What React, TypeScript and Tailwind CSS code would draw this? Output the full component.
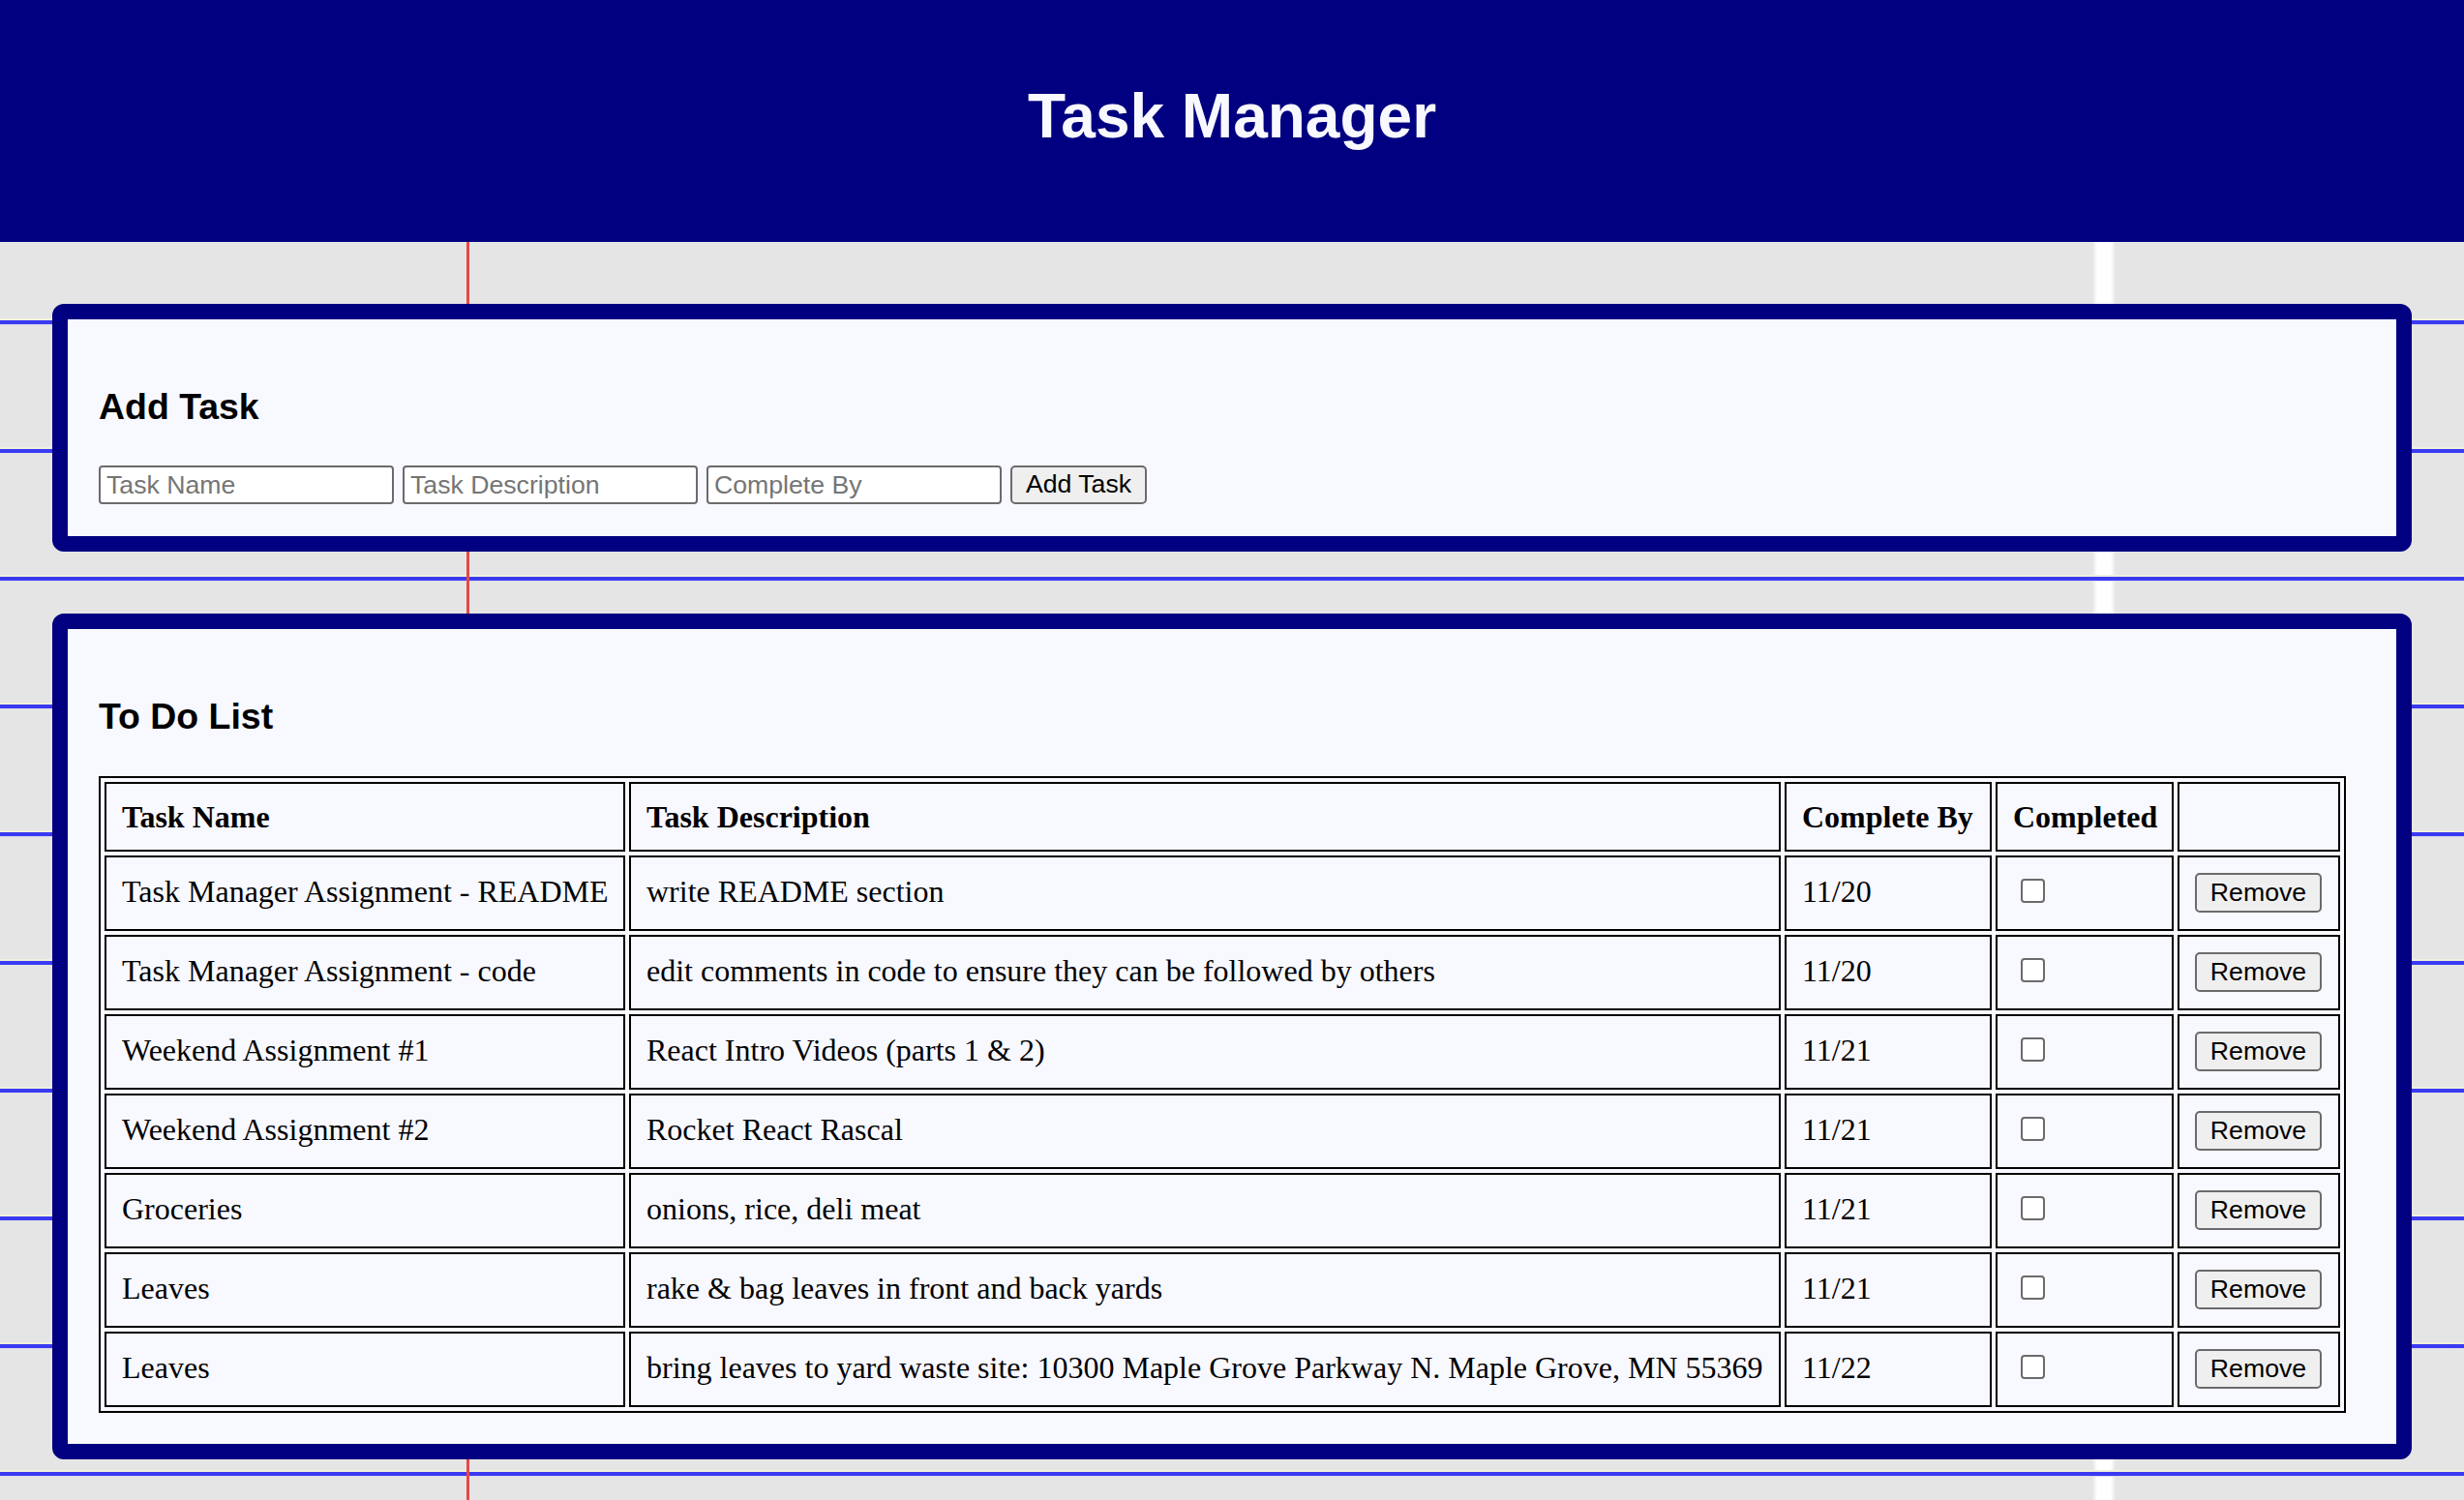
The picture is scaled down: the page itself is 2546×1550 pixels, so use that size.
import React, { useState } from "react";

type Task = { name: string; desc: string; by: string; done: boolean };

const initialTasks: Task[] = [
  { name: "Task Manager Assignment - README", desc: "write README section", by: "11/20", done: false },
  { name: "Task Manager Assignment - code", desc: "edit comments in code to ensure they can be followed by others", by: "11/20", done: false },
  { name: "Weekend Assignment #1", desc: "React Intro Videos (parts 1 & 2)", by: "11/21", done: false },
  { name: "Weekend Assignment #2", desc: "Rocket React Rascal", by: "11/21", done: false },
  { name: "Groceries", desc: "onions, rice, deli meat", by: "11/21", done: false },
  { name: "Leaves", desc: "rake & bag leaves in front and back yards", by: "11/21", done: false },
  { name: "Leaves", desc: "bring leaves to yard waste site: 10300 Maple Grove Parkway N. Maple Grove, MN 55369", by: "11/22", done: false },
];

export default function App() {
  const [tasks, setTasks] = useState<Task[]>(initialTasks);
  const [name, setName] = useState("");
  const [desc, setDesc] = useState("");
  const [by, setBy] = useState("");

  const addTask = () => {
    if (!name.trim()) return;
    setTasks([...tasks, { name, desc, by, done: false }]);
    setName("");
    setDesc("");
    setBy("");
  };

  const inputCls =
    "h-[40px] w-[305px] rounded-[4px] border-2 border-[#6b6b6b] bg-white px-[6px] text-[26.67px] text-black placeholder:text-[#757575] outline-none font-['Liberation_Sans',Arial,sans-serif]";

  return (
    <div className="min-h-screen bg-[#e5e5e5] bg-[image:linear-gradient(to_right,transparent_482px,#e64848_482px,#e64848_485px,transparent_485px),repeating-linear-gradient(to_bottom,transparent_0px,transparent_65px,#f0f0dc_65px,#f0f0dc_67px,#3a3af2_67px,#3a3af2_71px,#d6d6f2_71px,transparent_72px,transparent_132.22px),linear-gradient(to_right,transparent_2162px,#ffffff_2167px,#ffffff_2181px,transparent_2186px)] pb-[42px] font-['Liberation_Sans',Arial,sans-serif]">
      <header className="h-[250px] bg-[#000080] pt-[83px]">
        <h1 className="text-center text-[64px] font-bold leading-[74px] text-[#f8f8ff]">Task Manager</h1>
      </header>

      <main className="flex flex-col gap-[64px] px-[54px] pt-[64px]">
        <section className="rounded-[12px] border-[16px] border-[#000080] bg-[#f8f8ff] px-[32px] pb-[33px] pt-[32px]">
          <h3 className="mb-[39px] mt-[37px] text-[37.44px] font-bold leading-[43px] text-black">Add Task</h3>
          <div className="flex gap-[9px]">
            <input className={inputCls} placeholder="Task Name" value={name} onChange={(e) => setName(e.target.value)} />
            <input className={inputCls} placeholder="Task Description" value={desc} onChange={(e) => setDesc(e.target.value)} />
            <input className={inputCls} placeholder="Complete By" value={by} onChange={(e) => setBy(e.target.value)} />
            <button
              onClick={addTask}
              className="h-[40px] w-[141px] rounded-[5px] border-2 border-[#6b6b6b] bg-[#efefef] pb-[3px] text-[26.67px] leading-[30px] text-black font-['Liberation_Sans',Arial,sans-serif]"
            >
              Add Task
            </button>
          </div>
        </section>

        <section className="rounded-[12px] border-[16px] border-[#000080] bg-[#f8f8ff] px-[32px] pb-[32px] pt-[32px]">
          <h3 className="mb-[40px] mt-[37px] text-[37.44px] font-bold leading-[43px] text-black">To Do List</h3>
          <table className="w-[2322px] table-fixed border-separate border-spacing-[4px] border-2 border-black text-[32px] leading-[36px] text-black font-['Liberation_Serif','Times_New_Roman',serif]">
            <thead>
              <tr>
                <th className="w-[538px] whitespace-nowrap border-2 border-black p-[16px] text-left align-middle font-bold">Task Name</th>
                <th className="w-[1190px] whitespace-nowrap border-2 border-black p-[16px] text-left align-middle font-bold">Task Description</th>
                <th className="w-[214px] whitespace-nowrap border-2 border-black p-[16px] text-left align-middle font-bold">Complete By</th>
                <th className="w-[184px] whitespace-nowrap border-2 border-black p-[16px] text-left align-middle font-bold">Completed</th>
                <th className="w-[168px] border-2 border-black p-[16px]"></th>
              </tr>
            </thead>
            <tbody>
              {tasks.map((t, i) => (
                <tr key={i}>
                  <td className="whitespace-nowrap border-2 border-black px-[16px] pb-[20px] pt-[16px] align-middle">{t.name}</td>
                  <td className="whitespace-nowrap border-2 border-black px-[16px] pb-[20px] pt-[16px] align-middle">{t.desc}</td>
                  <td className="whitespace-nowrap border-2 border-black px-[16px] pb-[20px] pt-[16px] align-middle">{t.by}</td>
                  <td className="border-2 border-black p-[16px] align-middle">
                    <input
                      type="checkbox"
                      checked={t.done}
                      onChange={() =>
                        setTasks(tasks.map((x, j) => (j === i ? { ...x, done: !x.done } : x)))
                      }
                      className="mb-[5px] ml-[8px] block h-[25px] w-[25px] appearance-none rounded-[4px] border-2 border-[#6b6b6b] bg-white checked:border-[#0075ff] checked:bg-[#0075ff]"
                    />
                  </td>
                  <td className="border-2 border-black p-[16px] align-middle">
                    <button
                      onClick={() => setTasks(tasks.filter((_, j) => j !== i))}
                      className="mb-[1px] block h-[41px] w-[131px] rounded-[5px] border-2 border-[#6b6b6b] bg-[#efefef] pb-[2px] text-[26.67px] leading-[30px] text-black font-['Liberation_Sans',Arial,sans-serif]"
                    >
                      Remove
                    </button>
                  </td>
                </tr>
              ))}
            </tbody>
          </table>
        </section>
      </main>
    </div>
  );
}
